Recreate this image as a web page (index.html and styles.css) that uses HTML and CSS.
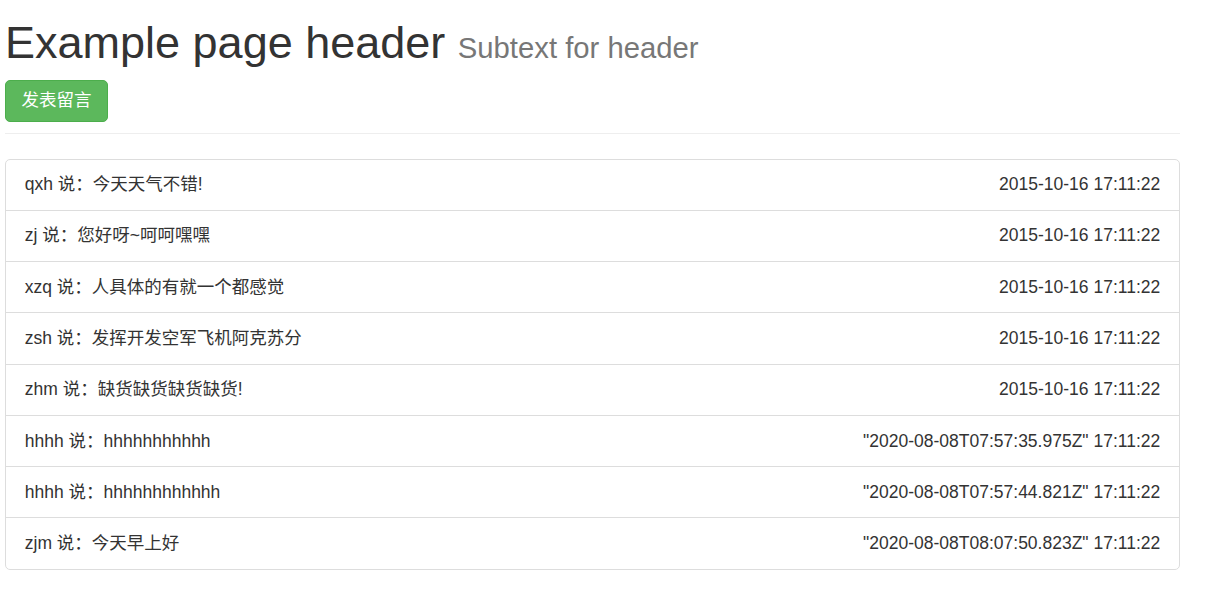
FILE: index.html
```
<!DOCTYPE html>
<html lang="zh-CN">
<head>
<meta charset="utf-8">
<title>留言板</title>
<link rel="stylesheet" href="styles.css">
</head>
<body>
<div class="container">
  <div class="page-header">
    <h1 class="title">Example page header <small class="subtext">Subtext for header</small></h1>
    <button class="btn-success" type="button">发表留言</button>
  </div>
  <ul class="list-group">
    <li class="list-item"><span class="msg">qxh 说：今天天气不错!</span><span class="time">2015-10-16 17:11:22</span></li>
    <li class="list-item"><span class="msg">zj 说：您好呀~呵呵嘿嘿</span><span class="time">2015-10-16 17:11:22</span></li>
    <li class="list-item"><span class="msg">xzq 说：人具体的有就一个都感觉</span><span class="time">2015-10-16 17:11:22</span></li>
    <li class="list-item"><span class="msg">zsh 说：发挥开发空军飞机阿克苏分</span><span class="time">2015-10-16 17:11:22</span></li>
    <li class="list-item"><span class="msg">zhm 说：缺货缺货缺货缺货!</span><span class="time">2015-10-16 17:11:22</span></li>
    <li class="list-item"><span class="msg">hhhh 说：hhhhhhhhhhh</span><span class="time">"2020-08-08T07:57:35.975Z" 17:11:22</span></li>
    <li class="list-item"><span class="msg">hhhh 说：hhhhhhhhhhhh</span><span class="time">"2020-08-08T07:57:44.821Z" 17:11:22</span></li>
    <li class="list-item"><span class="msg">zjm 说：今天早上好</span><span class="time">"2020-08-08T08:07:50.823Z" 17:11:22</span></li>
  </ul>
</div>
</body>
</html>
```

FILE: styles.css
```
* {
  box-sizing: border-box;
}

html, body {
  margin: 0;
  padding: 0;
  background: #fff;
}

body {
  font-family: "Liberation Sans", Arial, "Noto Sans CJK SC", sans-serif;
  font-size: 17.5px;
  line-height: 25px;
  color: #333;
}

.container {
  width: 1175px;
  margin-left: 5px;
}

.page-header {
  padding-bottom: 11px;
  border-bottom: 1px solid #eee;
  margin-bottom: 25px;
}

.title {
  margin: 18px 0 12px 0;
  font-size: 45px;
  line-height: 49.5px;
  font-weight: 500;
  color: #333;
}

.subtext {
  font-size: 29.25px;
  font-weight: 400;
  color: #777;
  line-height: 1;
}

.btn-success {
  display: inline-block;
  height: 42px;
  padding: 0 15.5px 2px;
  font-family: "Liberation Sans", Arial, "Noto Sans CJK SC", sans-serif;
  font-size: 17.5px;
  line-height: 38px;
  color: #fff;
  background-color: #5cb85c;
  border: 1px solid #4cae4c;
  border-radius: 5px;
  cursor: pointer;
  vertical-align: top;
}

.list-group {
  list-style: none;
  margin: 0;
  padding: 0;
  border: 1px solid #ddd;
  border-radius: 5px;
}

.list-item {
  display: flex;
  justify-content: space-between;
  align-items: center;
  padding: 12.65px 18.75px;
  line-height: 25px;
  border-top: 1px solid #ddd;
}

.list-item:first-child {
  border-top: none;
}

.msg,
.time {
  white-space: nowrap;
}
```
